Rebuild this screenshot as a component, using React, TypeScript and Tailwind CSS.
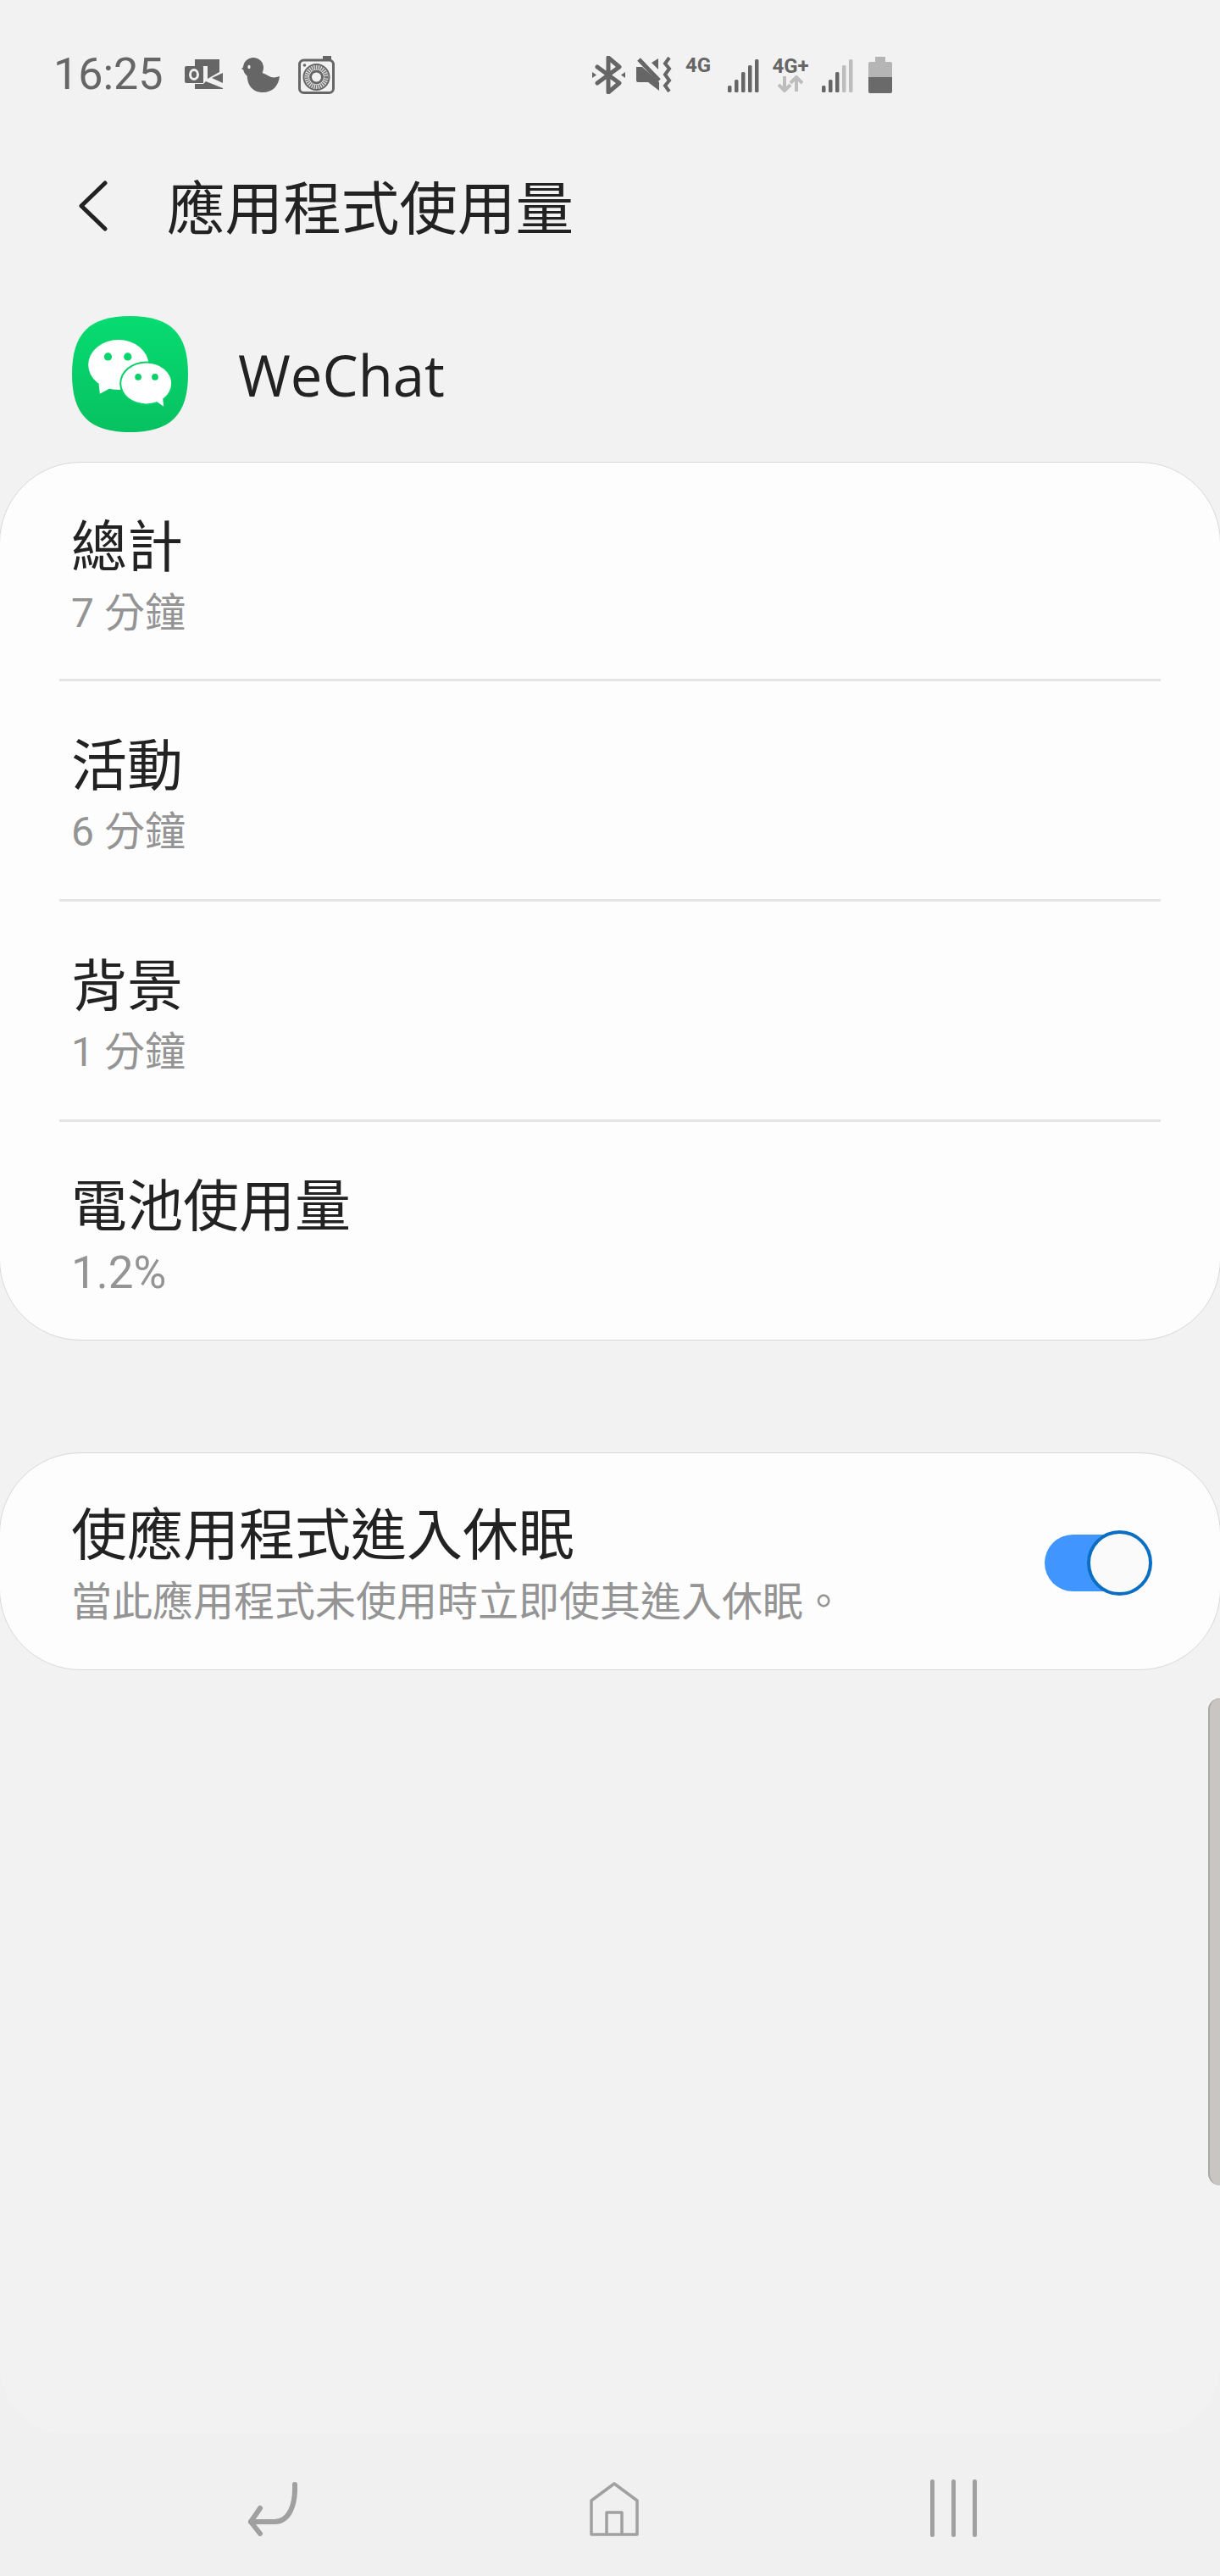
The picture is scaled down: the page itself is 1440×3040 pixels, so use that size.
const cjk = "font-['Noto_Sans_CJK_TC','Noto_Sans',sans-serif]";

const usage = [
  { title: "總計", value: "7 分鐘" },
  { title: "活動", value: "6 分鐘" },
  { title: "背景", value: "1 分鐘" },
  { title: "電池使用量", value: "1.2%" },
];

function OutlookIcon() {
  return (
    <svg width="45" height="36" viewBox="0 0 45 36" fill="#666">
      <path d="M12 0H41V15L27 23V8H12Z" />
      <path d="M45 16V28L32 22Z" />
      <path d="M12 35V29H22L25 26L45 34V35Z" />
      <path d="M2 8H21Q22 8 22 9V28H2Q0 28 0 26V10Q0 8 2 8Z" />
      <ellipse cx="11" cy="18" rx="4.5" ry="5.5" fill="none" stroke="#f2f2f2" strokeWidth="3" />
    </svg>
  );
}

function DuckIcon() {
  return (
    <svg width="45" height="41" viewBox="0 0 45 41" fill="#666">
      <circle cx="14" cy="12" r="12" />
      <path d="M0 13L6 8V17Z" />
      <path d="M7 16C5 33 14 41 25 41C37 41 44 33 45 22C40 24 35 24 31 21C28 19 25 19 24 17Z" />
      <ellipse cx="9" cy="11" rx="1.6" ry="2.2" fill="#f2f2f2" />
    </svg>
  );
}

function CameraIcon() {
  return (
    <svg width="43" height="45" viewBox="0 0 43 45" fill="none" stroke="#666">
      <rect x="29" y="0" width="10" height="6" fill="#666" stroke="none" />
      <rect x="1.5" y="5" width="40" height="38.5" rx="5" strokeWidth="3" />
      <circle cx="7.5" cy="11" r="1.8" fill="#666" stroke="none" />
      <circle cx="21.5" cy="25" r="15" strokeWidth="2" />
      <circle cx="21.5" cy="25" r="11.5" strokeWidth="5" strokeDasharray="1.6 1" stroke="#777" />
      <circle cx="21.5" cy="25" r="7" strokeWidth="3" />
    </svg>
  );
}

function BluetoothIcon() {
  return (
    <svg width="39" height="45" viewBox="0 0 39 45" fill="none" stroke="#666" strokeWidth="5">
      <path d="M6 13L32 32L19 43V2L32 13L6 32" strokeLinejoin="round" strokeLinecap="round" />
      <path d="M0 19L5 22.5L0 26Z" fill="#666" stroke="none" />
      <path d="M39 19L34 22.5L39 26Z" fill="#666" stroke="none" />
    </svg>
  );
}

function MuteIcon() {
  return (
    <svg width="43" height="42" viewBox="0 0 43 42" fill="#666">
      <path d="M0 12H7L27 30V40L14 30H2Q0 30 0 28Z" />
      <path d="M18 7L26 2V15Z" />
      <path d="M3 3L27 28" stroke="#666" strokeWidth="5" />
      <path d="M39 1L34 8L39 14L34 21L39 28L34 34L39 41" fill="none" stroke="#666" strokeWidth="4" />
    </svg>
  );
}

function SignalIcon({ dim }: { dim: number }) {
  const bars = [8, 15, 24, 32, 39];
  return (
    <svg width="37" height="39" viewBox="0 0 37 39">
      {bars.map((h, i) => (
        <rect
          key={h}
          x={i * 8}
          y={39 - h}
          width="4.5"
          height={h}
          rx="1.5"
          fill={i >= 5 - dim ? "#bdbdbd" : "#666"}
        />
      ))}
    </svg>
  );
}

function BatteryIcon() {
  return (
    <svg width="28" height="43" viewBox="0 0 28 43">
      <path d="M8 0H20V6H26Q28 6 28 8V24H0V8Q0 6 2 6H8Z" fill="#b5b5b5" />
      <path d="M0 24H28V41Q28 43 26 43H2Q0 43 0 41Z" fill="#6a6a6a" />
    </svg>
  );
}

function WeChatLogo() {
  return (
    <svg width="137" height="137" viewBox="0 0 100 100">
      <defs>
        <linearGradient id="wechat" x1="0" y1="0" x2="0" y2="1">
          <stop offset="0" stopColor="#07dc71" />
          <stop offset="1" stopColor="#07c160" />
        </linearGradient>
      </defs>
      <path d="M50 0C85 0 100 15 100 50C100 85 85 100 50 100C15 100 0 85 0 50C0 15 15 0 50 0Z" fill="url(#wechat)" />
      <ellipse cx="40" cy="42" rx="26" ry="21.5" fill="#fff" />
      <path d="M23 58L24 67L33 62Z" fill="#fff" />
      <circle cx="31" cy="35" r="3.4" fill="#07d56d" />
      <circle cx="48" cy="35" r="3.4" fill="#07d56d" />
      <ellipse cx="64" cy="58" rx="23" ry="19" fill="#07d069" />
      <ellipse cx="64" cy="58" rx="21.5" ry="17.5" fill="#fff" />
      <path d="M72 73L79 78L78 69Z" fill="#fff" />
      <circle cx="57" cy="52.5" r="2.8" fill="#07d069" />
      <circle cx="71.5" cy="52.5" r="2.8" fill="#07d069" />
    </svg>
  );
}

export default function App() {
  return (
    <div className={`relative flex h-[3040px] w-[1440px] flex-col overflow-hidden bg-[#f0f0f0] ${cjk}`}>
      <div className="flex h-[2872px] shrink-0 flex-col rounded-b-[80px] bg-[#f2f2f2]">
        {/* status bar */}
        <div className="flex h-[176px] shrink-0 items-center pl-[63px]">
          <span className="w-[155px] font-['Roboto'] text-[52px] leading-none text-[#666]">16:25</span>
          <div className="flex items-center gap-[22px]">
            <OutlookIcon />
            <DuckIcon />
            <CameraIcon />
          </div>
          <div className="ml-[304px] flex items-center">
            <BluetoothIcon />
            <div className="ml-[13px]">
              <MuteIcon />
            </div>
            <span className="mb-[22px] ml-[15px] w-[50px] font-['Roboto'] text-[24px] leading-none font-bold text-[#666]">4G</span>
            <div className="mt-[2px]">
              <SignalIcon dim={0} />
            </div>
            <div className="ml-[15px] flex w-[44px] flex-col items-center">
              <span className="font-['Roboto'] text-[24px] leading-[22px] font-bold text-[#666]">4G+</span>
              <svg width="30" height="20" viewBox="0 0 30 20" fill="none" stroke="#bdbdbd" strokeWidth="4">
                <path d="M8 1V18M1 11L8 18L15 11" />
                <path d="M22 19V2M15 9L22 2L29 9" />
              </svg>
            </div>
            <div className="mt-[2px] ml-[15px]">
              <SignalIcon dim={2} />
            </div>
            <div className="ml-[18px]">
              <BatteryIcon />
            </div>
          </div>
        </div>

        {/* header */}
        <div className="flex h-[138px] shrink-0 items-center pl-[91px]">
          <svg width="36" height="60" viewBox="0 0 36 60" fill="none" stroke="#222" strokeWidth="5" strokeLinecap="round" strokeLinejoin="round" className="-mt-[4px]">
            <path d="M33 3L5 30L33 57" />
          </svg>
          <h1 className="-mt-[8px] ml-[70px] text-[68.6px] leading-none font-normal text-[#222]">應用程式使用量</h1>
        </div>

        {/* app row */}
        <div className="flex h-[231px] shrink-0 items-start pt-[59px] pl-[85px]">
          <WeChatLogo />
          <span className="mt-[23px] ml-[59px] font-['Open_Sans'] text-[67px] leading-[92px] text-[#222]">WeChat</span>
        </div>

        {/* usage card */}
        <section className="-mx-px shrink-0 rounded-[96px] border border-[#d9d9d9] bg-[#fdfdfd]">
          {usage.map((row, i) => (
            <div key={row.title} className="h-[260px] px-[70px] first:h-[258px] last:h-[257px]">
              <div className={`h-full ${i < usage.length - 1 ? "border-b-[3px] border-[#e4e4e4]" : ""}`}>
                <div className="px-[14px] pt-[52px]">
                  <p className="text-[66px] leading-[84px] text-[#222]">{row.title}</p>
                  <p className={`mt-[4px] font-['Roboto','Noto_Sans_CJK_TC',sans-serif] leading-[76px] text-[#949494] ${row.value.endsWith("%") ? "text-[53px]" : "text-[48px]"}`}>
                    {row.value}
                  </p>
                </div>
              </div>
            </div>
          ))}
        </section>

        {/* sleep card */}
        <section className="-mx-px mt-[132px] flex h-[257px] shrink-0 items-center justify-between rounded-[96px] border border-[#d9d9d9] bg-[#fdfdfd] pt-[3px] pr-[80px] pl-[84px]">
          <div>
            <p className="text-[66px] leading-[84px] text-[#222]">使應用程式進入休眠</p>
            <p className="text-[48px] leading-[76px] text-[#949494]">當此應用程式未使用時立即使其進入休眠。</p>
          </div>
          <div className="relative flex h-[77px] w-[127px] items-center">
            <div className="h-[67px] w-[110px] rounded-full bg-[#4095ff]" />
            <div className="absolute top-0 right-0 size-[77px] rounded-full border-4 border-[#0a6fc2] bg-[#fafafa]" />
          </div>
        </section>
      </div>

      {/* nav bar */}
      <div className="flex flex-1 items-start justify-between pt-[57px] pr-[287px] pl-[291px]">
        <svg width="60" height="64" viewBox="0 0 60 64" fill="none" stroke="#a0a0a0" strokeWidth="6" strokeLinecap="round" strokeLinejoin="round">
          <path d="M57 3C58 28 50 47 33 47H5" />
          <path d="M16 31L5 47L16 61" />
        </svg>
        <svg width="58" height="64" viewBox="0 0 58 64" fill="none" stroke="#a0a0a0" strokeWidth="3.5" strokeLinejoin="round">
          <path d="M29 2L56 22V62H2V22Z" />
          <path d="M20 62V36H38V62" />
        </svg>
        <div className="-mt-[3px] flex h-[68px] gap-[20px]">
          <div className="w-[5px] rounded-full bg-[#a0a0a0]" />
          <div className="w-[5px] rounded-full bg-[#a0a0a0]" />
          <div className="w-[5px] rounded-full bg-[#a0a0a0]" />
        </div>
      </div>

      {/* scroll thumb */}
      <div className="absolute top-[2004px] right-0 h-[575px] w-[14px] rounded-l-[14px] border-l-2 border-[#aaa8a5] bg-[#c8c5c2]" />
    </div>
  );
}
